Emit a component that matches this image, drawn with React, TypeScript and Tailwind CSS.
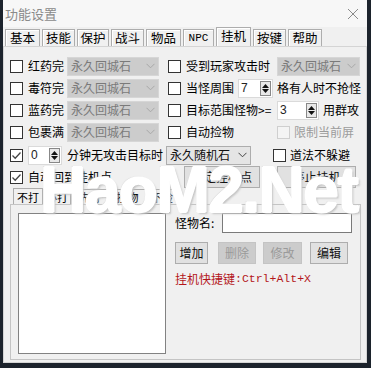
import React from "react";

const FONT = { fontFamily: '"Noto Sans CJK SC", "Noto Sans", sans-serif' };

function Check({ checked = false, disabled = false }: { checked?: boolean; disabled?: boolean }) {
  return (
    <span
      className={`flex h-[13px] w-[13px] shrink-0 items-center justify-center border ${
        disabled ? "border-[#cfcfcf] bg-[#f4f4f4]" : "border-[#333333] bg-white"
      }`}
    >
      {checked && (
        <svg width="11" height="11" viewBox="0 0 11 11">
          <path d="M1.5 5.5 L4.2 8.2 L9.5 2.5" fill="none" stroke="#444" strokeWidth="1.3" />
        </svg>
      )}
    </span>
  );
}

function Chevron({ color }: { color: string }) {
  return (
    <svg width="9" height="6" viewBox="0 0 9 6">
      <path d="M0.5 0.8 L4.5 4.8 L8.5 0.8" fill="none" stroke={color} strokeWidth="1" />
    </svg>
  );
}

function Select({ text, width, disabled = false }: { text: string; width: string; disabled?: boolean }) {
  return (
    <div
      className={`flex h-[19px] shrink-0 items-center justify-between border ${width} ${
        disabled ? "border-[#d6d6d6] bg-[#cccccc] text-[#7a7a7a]" : "border-[#adadad] bg-[#e5e5e5] text-[#111]"
      }`}
    >
      <span className="whitespace-nowrap pl-[3px] leading-none">{text}</span>
      <span className="flex w-[16px] items-center justify-center">
        <Chevron color={disabled ? "#a8a8a8" : "#444"} />
      </span>
    </div>
  );
}

function Spinner({ value, width }: { value: string; width: string }) {
  return (
    <div className={`flex h-[19px] shrink-0 items-center justify-between border border-[#dadada] bg-white ${width}`}>
      <span className="pl-[2px] text-[12px] leading-none text-[#222]" style={{ fontFamily: '"Liberation Sans", sans-serif' }}>
        {value}
      </span>
      <span className="mr-[1px] flex h-[15px] w-[11px] flex-col items-center justify-center gap-[1px] border border-[#888] bg-[#e8e8e8]">
        <svg width="7" height="4" viewBox="0 0 7 4">
          <path d="M0 4 L3.5 0 L7 4 Z" fill="#111" />
        </svg>
        <svg width="7" height="4" viewBox="0 0 7 4">
          <path d="M0 0 L3.5 4 L7 0 Z" fill="#111" />
        </svg>
      </span>
    </div>
  );
}

function Btn({ label, width, disabled = false }: { label: string; width: string; disabled?: boolean }) {
  return (
    <div
      className={`flex h-[22px] shrink-0 items-center justify-center whitespace-nowrap border ${width} ${
        disabled ? "border-[#c4c4c4] bg-[#cccccc] text-[#9a9a9a]" : "border-[#adadad] bg-[#e1e1e1] text-[#111]"
      }`}
    >
      {label}
    </div>
  );
}

const tabs = ["基本", "技能", "保护", "战斗", "物品", "NPC", "挂机", "按键", "帮助"];
const tabW = ["w-[35px]", "w-[33px]", "w-[32px]", "w-[33px]", "w-[35px]", "w-[31px]", "w-[35px]", "w-[33px]", "w-[34px]"];

const innerTabs = ["不打", "必打", "先打", "捡物", "不捡"];
const innerW = ["w-[30px]", "w-[28px]", "w-[38px]", "w-[37px]", "w-[32px]"];

export default function App() {
  return (
    <div className="relative h-[368px] w-[371px] overflow-hidden bg-[#1c232c] text-[12px]" style={FONT}>
      <div className="ml-[3px] flex h-[363px] w-[364px] flex-col bg-[#f0f0f0]">
        {/* Title */}
        <div className="flex h-[27px] shrink-0 items-center justify-between bg-[#f7f7f7] pl-[2px] pr-[8px]">
          <span className="text-[13px] text-[#8a8a8a]">功能设置</span>
          <svg width="12" height="12" viewBox="0 0 12 12">
            <path d="M1 1 L11 11 M11 1 L1 11" stroke="#8a8a8a" strokeWidth="1" />
          </svg>
        </div>

        {/* Tabs */}
        <div className="flex h-[19px] shrink-0 items-end gap-[2px] pl-[2px]">
          {tabs.map((t, i) => {
            const sel = t === "挂机";
            return (
              <div
                key={t}
                className={`flex items-center justify-center border border-b-0 border-[#adadad] bg-[#f0f0f0] shadow-[inset_1px_1px_0_#ffffff] ${tabW[i]} ${
                  sel ? "-mb-[1px] h-[20px] pb-[2px]" : "h-[17px]"
                }`}
              >
                <span
                  className={t === "NPC" ? "text-[11px]" : "text-[12.5px]"}
                  style={t === "NPC" ? { fontFamily: '"Liberation Mono", monospace' } : undefined}
                >
                  {t}
                </span>
              </div>
            );
          })}
        </div>

        {/* Panel */}
        <div className="flex flex-1 flex-col border border-[#d4d4d4] bg-[#f0f0f0] pl-[6px] pt-[8px]">
          {/* Row 1 */}
          <div className="flex h-[22px] items-center whitespace-nowrap">
            <div className="flex w-[158px] items-center">
              <Check />
              <span className="ml-[5px] w-[39px]">红药完</span>
              <Select text="永久回城石" width="w-[92px]" disabled />
            </div>
            <Check />
            <span className="ml-[5px] w-[91px]">受到玩家攻击时</span>
            <Select text="永久回城石" width="w-[83px]" disabled />
          </div>
          {/* Row 2 */}
          <div className="flex h-[22px] items-center whitespace-nowrap">
            <div className="flex w-[158px] items-center">
              <Check />
              <span className="ml-[5px] w-[39px]">毒符完</span>
              <Select text="永久回城石" width="w-[92px]" disabled />
            </div>
            <Check />
            <span className="ml-[5px] w-[52px]">当怪周围</span>
            <Spinner value="7" width="w-[35px]" />
            <span className="ml-[4px]">格有人时不抢怪</span>
          </div>
          {/* Row 3 */}
          <div className="flex h-[22px] items-center whitespace-nowrap">
            <div className="flex w-[158px] items-center">
              <Check />
              <span className="ml-[5px] w-[39px]">蓝药完</span>
              <Select text="永久回城石" width="w-[92px]" disabled />
            </div>
            <Check />
            <span className="ml-[5px] w-[91px]">目标范围怪物&gt;=</span>
            <Spinner value="3" width="w-[42px]" />
            <span className="ml-[4px]">用群攻</span>
          </div>
          {/* Row 4 */}
          <div className="flex h-[22px] items-center whitespace-nowrap">
            <div className="flex w-[158px] items-center">
              <Check />
              <span className="ml-[5px] w-[39px]">包裹满</span>
              <Select text="永久回城石" width="w-[92px]" disabled />
            </div>
            <Check />
            <span className="ml-[5px] w-[91px]">自动捡物</span>
            <Check disabled />
            <span className="ml-[4px] text-[#9c9c9c]">限制当前屏</span>
          </div>
          {/* Row 5 */}
          <div className="mt-[1px] flex h-[22px] items-center whitespace-nowrap">
            <Check checked />
            <span className="ml-[5px]">
              <Spinner value="0" width="w-[34px]" />
            </span>
            <span className="ml-[5px] w-[99px]">分钟无攻击目标时</span>
            <Select text="永久随机石" width="w-[85px]" />
            <span className="ml-[22px]">
              <Check />
            </span>
            <span className="ml-[4px]">道法不躲避</span>
          </div>
          {/* Row 6 */}
          <div className="flex h-[22px] items-center whitespace-nowrap">
            <Check checked />
            <span className="ml-[5px] w-[156px]">自动回到挂机点</span>
            <Btn label="设定挂机点" width="w-[76px]" />
            <span className="ml-[17px]">
              <Btn label="停止挂机" width="w-[79px]" />
            </span>
          </div>

          {/* Inner tabs */}
          <div className="flex h-[16px] items-end pl-[3px]">
            {innerTabs.map((t, i) => (
              <div
                key={t}
                className={`flex items-center justify-center whitespace-nowrap border border-b-0 border-[#adadad] bg-[#f0f0f0] text-[11px] ${innerW[i]} ${
                  i === 0 ? "-mb-[1px] h-[17px]" : "h-[15px]"
                }`}
              >
                {t}
              </div>
            ))}
          </div>
          <div className="mb-[2px] mr-[5px] flex flex-1 border border-[#c4c4c4] pl-[7px] pt-[8px]">
            <div className="mb-[5px] w-[148px] border border-[#828282] bg-white" />
            <div className="ml-[9px] flex flex-col">
              <div className="flex h-[20px] items-center whitespace-nowrap">
                <span className="w-[47px]">怪物名:</span>
                <div className="h-[20px] w-[130px] border border-[#7a7a7a] bg-white" />
              </div>
              <div className="mt-[9px] flex items-center">
                <Btn label="增加" width="w-[33px]" />
                <span className="ml-[10px]">
                  <Btn label="删除" width="w-[38px]" disabled />
                </span>
                <span className="ml-[7px]">
                  <Btn label="修改" width="w-[39px]" disabled />
                </span>
                <span className="ml-[8px]">
                  <Btn label="编辑" width="w-[38px]" />
                </span>
              </div>
              <div className="mt-[6px] flex items-center whitespace-nowrap text-[#b4161b]">
                <span>挂机快捷键</span>
                <span className="text-[11.5px]" style={{ fontFamily: '"Liberation Mono", monospace' }}>
                  :Ctrl+Alt+X
                </span>
              </div>
            </div>
          </div>
        </div>
      </div>

      {/* watermark */}
      <div
        className="pointer-events-none absolute left-[40px] top-[158px] whitespace-nowrap text-[64px] font-bold leading-none tracking-[-1.5px] text-white"
        style={{
          fontFamily: '"Liberation Sans", sans-serif',
          textShadow:
            "1px 0 0 #fff, -1px 0 0 #fff, 0 1px 0 #fff, 0 -1px 0 #fff, 2px 2px 2px #c4c4c4, -1px -1px 1px #dcdcdc",
        }}
      >
        HaoM2.Net
      </div>
    </div>
  );
}
